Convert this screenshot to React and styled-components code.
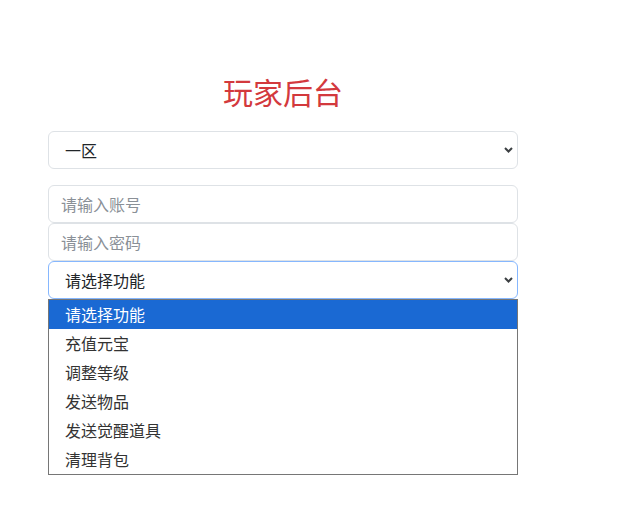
import React from "react";
import styled, { createGlobalStyle } from "styled-components";

const GlobalStyle = createGlobalStyle`
  html, body {
    margin: 0;
    padding: 0;
    background: #fff;
  }
  body {
    font-family: "Noto Sans CJK SC", "Noto Sans", "Liberation Sans", sans-serif;
    color: #212529;
  }
`;

const Page = styled.div`
  padding: 73px 0 0 48px;
`;

const Panel = styled.div`
  width: 470px;
  display: flex;
  flex-direction: column;
`;

const Title = styled.h2`
  margin: 0 0 22px;
  font-size: 30px;
  line-height: 36px;
  font-weight: 400;
  text-align: center;
  color: #d3393d;
`;

const SelectBox = styled.div`
  position: relative;
  margin-bottom: ${(p) => p.$gap || 0}px;
`;

const Select = styled.select`
  appearance: none;
  display: block;
  width: 100%;
  height: 38px;
  box-sizing: border-box;
  padding: 0 24px 0 16px;
  font-family: inherit;
  font-size: 16px;
  color: #212529;
  background: #fff;
  border: 1px solid ${(p) => (p.$focus ? "#86b7fe" : "#dee2e6")};
  border-radius: 6px;
  outline: none;
`;

const Chevron = styled.svg`
  position: absolute;
  right: 5px;
  top: 50%;
  width: 9px;
  height: 6px;
  margin-top: -3px;
  pointer-events: none;
`;

const Input = styled.input`
  display: block;
  width: 100%;
  height: 38px;
  box-sizing: border-box;
  padding: 0 12px;
  font-family: inherit;
  font-size: 16px;
  color: #212529;
  background: #fff;
  border: 1px solid #dee2e6;
  border-radius: 6px;
  outline: none;
  &::placeholder {
    color: #8a9097;
  }
`;

const OptionList = styled.ul`
  list-style: none;
  margin: 0;
  padding: 0;
  border: 1px solid #767676;
  background: #fff;
`;

const OptionRow = styled.li`
  height: 29px;
  line-height: 29px;
  padding-left: 16px;
  font-size: 16px;
  color: ${(p) => (p.$active ? "#fff" : "#333")};
  background: ${(p) => (p.$active ? "#1a69d3" : "transparent")};
`;

const Arrow = () => (
  <Chevron viewBox="0 0 9 6">
    <path d="M1 1l3.5 3.5L8 1" fill="none" stroke="#3c4043" strokeWidth="2" />
  </Chevron>
);

const functions = ["请选择功能", "充值元宝", "调整等级", "发送物品", "发送觉醒道具", "清理背包"];

export default function App() {
  return (
    <>
      <GlobalStyle />
      <Page>
        <Panel>
          <Title>玩家后台</Title>
          <SelectBox $gap={16}>
            <Select defaultValue="1">
              <option value="1">一区</option>
              <option value="2">二区</option>
            </Select>
            <Arrow />
          </SelectBox>
          <Input placeholder="请输入账号" />
          <Input type="password" placeholder="请输入密码" />
          <SelectBox>
            <Select $focus defaultValue="0">
              {functions.map((f, i) => (
                <option key={f} value={i}>
                  {f}
                </option>
              ))}
            </Select>
            <Arrow />
          </SelectBox>
          <OptionList>
            {functions.map((f, i) => (
              <OptionRow key={f} $active={i === 0}>
                {f}
              </OptionRow>
            ))}
          </OptionList>
        </Panel>
      </Page>
    </>
  );
}
